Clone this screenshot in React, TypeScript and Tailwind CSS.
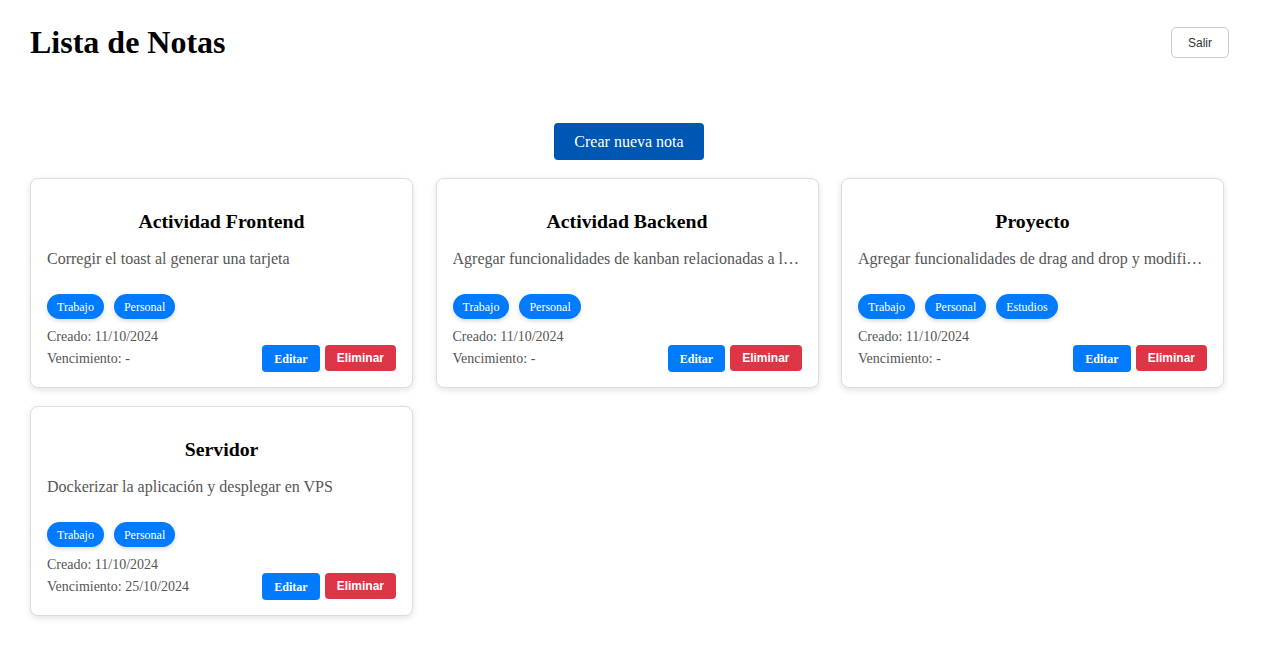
const notes = [
  {
    title: "Actividad Frontend",
    description: "Corregir el toast al generar una tarjeta",
    tags: ["Trabajo", "Personal"],
    created: "11/10/2024",
    due: "-",
  },
  {
    title: "Actividad Backend",
    description: "Agregar funcionalidades de kanban relacionadas a los tableros y las columnas del proyecto",
    tags: ["Trabajo", "Personal"],
    created: "11/10/2024",
    due: "-",
  },
  {
    title: "Proyecto",
    description: "Agregar funcionalidades de drag and drop y modificar estilos de la vista",
    tags: ["Trabajo", "Personal", "Estudios"],
    created: "11/10/2024",
    due: "-",
  },
  {
    title: "Servidor",
    description: "Dockerizar la aplicación y desplegar en VPS",
    tags: ["Trabajo", "Personal"],
    created: "11/10/2024",
    due: "25/10/2024",
  },
];

type Note = (typeof notes)[number];

function NoteCard({ note }: { note: Note }) {
  return (
    <article className="flex h-[210px] flex-col rounded-lg border border-[#dddddd] bg-white px-4 pb-[15px] pt-[15px] shadow-[0_2px_6px_rgba(0,0,0,0.12)]">
      <h3 className="mt-4 text-center text-[19.8px] font-bold leading-[22px] text-black">{note.title}</h3>
      <p className="mt-[17px] truncate text-base leading-[20px] text-[#555555]">{note.description}</p>
      <div className="mt-[25px] flex gap-[10px]">
        {note.tags.map((tag) => (
          <span
            key={tag}
            className="flex h-[25px] items-center rounded-full bg-[#007bff] px-[10px] text-xs text-white shadow-[0_2px_4px_rgba(0,0,0,0.15)]"
          >
            {tag}
          </span>
        ))}
      </div>
      <div className="mt-auto flex items-end justify-between">
        <div className="mb-[2px] text-sm leading-[22px] text-[#555555]">
          <p>Creado: {note.created}</p>
          <p>Vencimiento: {note.due}</p>
        </div>
        <div className="flex items-start gap-[5px] self-end">
          <button className="h-[27px] rounded bg-[#007bff] px-3 text-xs font-bold text-white">Editar</button>
          <button className="h-[26px] rounded bg-[#dc3545] px-3 font-['Liberation_Sans',Arial,sans-serif] text-xs font-bold text-white">
            Eliminar
          </button>
        </div>
      </div>
    </article>
  );
}

export default function App() {
  return (
    <div className="min-h-screen bg-white pl-[30px] pr-[34px] pt-[24px] font-['Liberation_Serif','Times_New_Roman',serif] text-black">
      <header className="flex items-center justify-between">
        <h1 className="text-[32px] font-bold leading-[37px]">Lista de Notas</h1>
        <button className="mr-[-1px] h-[31px] rounded-[5px] border border-[#cccccc] bg-white px-4 font-['Liberation_Sans',Arial,sans-serif] text-xs text-[#333333]">
          Salir
        </button>
      </header>

      <div className="mt-[62px] flex justify-center">
        <button className="h-[37px] rounded-[4px] bg-[#0056b3] px-5 text-base text-white">Crear nueva nota</button>
      </div>

      <section className="mt-[18px] grid grid-cols-[repeat(3,383px)] gap-x-[22.5px] gap-y-[18px]">
        {notes.map((note) => (
          <NoteCard key={note.title} note={note} />
        ))}
      </section>
    </div>
  );
}
